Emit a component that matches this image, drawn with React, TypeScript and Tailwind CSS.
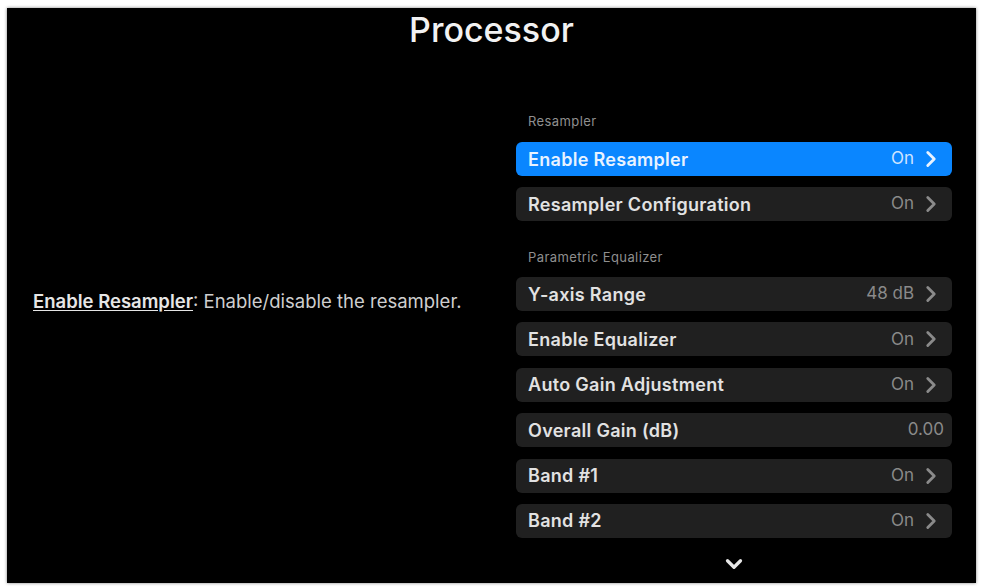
import { ChevronRight, ChevronDown } from 'lucide-react';

type Row = { label: string; value: string; chevron?: boolean; active?: boolean };

const resampler: Row[] = [
  { label: 'Enable Resampler', value: 'On', chevron: true, active: true },
  { label: 'Resampler Configuration', value: 'On', chevron: true },
];

const equalizer: Row[] = [
  { label: 'Y-axis Range', value: '48 dB', chevron: true },
  { label: 'Enable Equalizer', value: 'On', chevron: true },
  { label: 'Auto Gain Adjustment', value: 'On', chevron: true },
  { label: 'Overall Gain (dB)', value: '0.00' },
  { label: 'Band #1', value: 'On', chevron: true },
  { label: 'Band #2', value: 'On', chevron: true },
];

function SettingRow({ label, value, chevron, active }: Row) {
  return (
    <div
      className={`flex h-[34px] items-center rounded-[6px] pl-[12px] pr-[8px] ${
        active ? 'bg-[#0a86ff]' : 'bg-[#202020]'
      }`}
    >
      <span
        className={`flex-1 truncate text-[18px] font-semibold tracking-[0.3px] ${
          active ? 'text-[#e8f2ff]' : 'text-[#e2e2e2]'
        }`}
      >
        {label}
      </span>
      <span className={`text-[17px] ${active ? 'text-[#cfe4ff]' : 'text-[#8a8a8a]'}`}>{value}</span>
      {chevron && (
        <ChevronRight
          className={`ml-[4px] h-[26px] w-[26px] ${active ? 'text-[#e8f2ff]' : 'text-[#8a8a8a]'}`}
          strokeWidth={2.6}
        />
      )}
    </div>
  );
}

function SectionHeader({ children }: { children: string }) {
  return (
    <div className="pl-[12px] text-[13px] leading-[16px] tracking-[0.4px] text-[#8f8f8f]">{children}</div>
  );
}

export default function App() {
  return (
    <div
      className="h-[587px] w-[981px] bg-white pl-[7px] pt-[8px]"
      style={{ fontFamily: 'Inter, "Liberation Sans", sans-serif' }}
    >
      <div className="flex h-[575px] w-[969px] flex-col bg-black shadow-[0_0_3px_rgba(0,0,0,0.5)]">
        <h1 className="h-[44px] text-center text-[34px] font-medium leading-[44px] text-[#f2f2f2]">
          Processor
        </h1>

        <div className="flex flex-1">
          {/* ------- help text ------- */}
          <div className="flex w-[509px] items-start pl-[26px] pt-[236px]">
            <p className="text-[18.5px] text-[#cfcfcf]">
              <span className="font-semibold text-[#e6e6e6] underline underline-offset-2">Enable Resampler</span>
              : Enable/disable the resampler.
            </p>
          </div>

          {/* ------- settings list ------- */}
          <div className="flex w-[436px] flex-col pt-[61px]">
            <SectionHeader>Resampler</SectionHeader>
            <div className="mt-[13px] flex flex-col gap-[11px]">
              {resampler.map((r) => (
                <SettingRow key={r.label} {...r} />
              ))}
            </div>

            <div className="mt-[28px]">
              <SectionHeader>Parametric Equalizer</SectionHeader>
            </div>
            <div className="mt-[12px] flex flex-col gap-[11.4px]">
              {equalizer.map((r) => (
                <SettingRow key={r.label} {...r} />
              ))}
            </div>

            <div className="mt-[13px] flex justify-center">
              <ChevronDown className="h-[26px] w-[26px] text-[#e6e6e6]" strokeWidth={3} />
            </div>
          </div>
        </div>
      </div>
    </div>
  );
}
